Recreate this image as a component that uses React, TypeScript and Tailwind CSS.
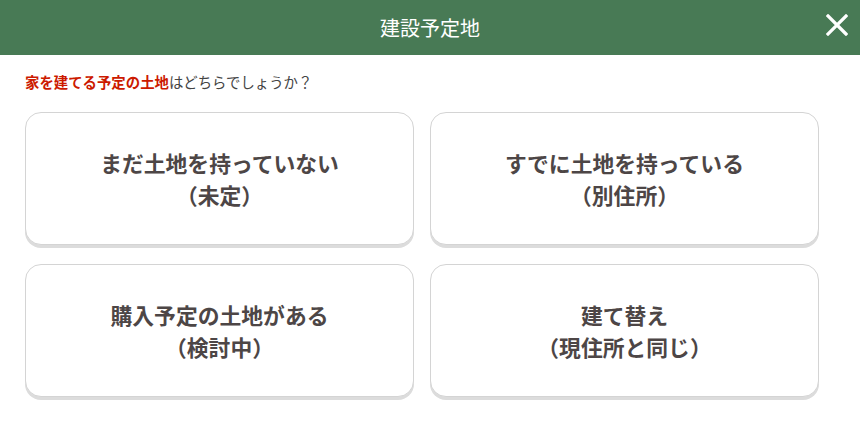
import React from "react";

const cards = [
  ["まだ土地を持っていない", "（未定）"],
  ["すでに土地を持っている", "（別住所）"],
  ["購入予定の土地がある", "（検討中）"],
  ["建て替え", "（現住所と同じ）"],
];

export default function App() {
  return (
    <div
      className="w-[860px] h-[432px] bg-white overflow-hidden"
      style={{ fontFamily: '"Noto Sans CJK JP", "Noto Sans", sans-serif' }}
    >
      <header className="relative h-[55px] bg-[#487a55] flex items-center justify-center">
        <h1 className="text-white text-[20px] leading-none font-normal">建設予定地</h1>
        <button className="absolute right-[12px] top-[14px] w-[22px] h-[22px]" aria-label="close">
          <svg viewBox="0 0 22 22" width="22" height="22">
            <path d="M2 2 L20 20 M20 2 L2 20" stroke="white" strokeWidth="3.2" strokeLinecap="square" />
          </svg>
        </button>
      </header>
      <div className="pl-[25px] pr-[41px]">
        <p className="mt-[18px] text-[14.4px] leading-[18px] text-[#444]">
          <span className="text-[#cc1a00] font-bold">家を建てる予定の土地</span>はどちらでしょうか？
        </p>
        <div className="mt-[21px] grid grid-cols-2 gap-x-[16px] gap-y-[19px]">
          {cards.map(([a, b]) => (
            <button
              key={a}
              className="h-[133px] rounded-[16px] border border-[#d4d4d4] bg-white shadow-[0_3px_0_#dcdcdc] flex flex-col items-center justify-center text-[#4d4646] font-bold text-[21.8px] leading-[32px]"
            >
              <span>{a}</span>
              <span>{b}</span>
            </button>
          ))}
        </div>
      </div>
    </div>
  );
}
